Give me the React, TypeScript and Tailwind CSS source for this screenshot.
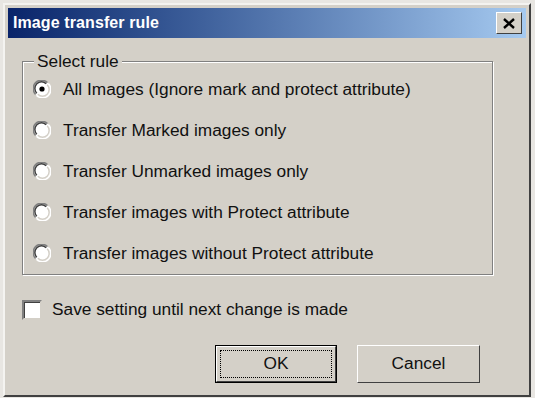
import React from "react";

const rules = [
  "All Images (Ignore mark and protect attribute)",
  "Transfer Marked images only",
  "Transfer Unmarked images only",
  "Transfer images with Protect attribute",
  "Transfer images without Protect attribute",
];

function Radio({ checked }: { checked?: boolean }) {
  return (
    <svg width="18" height="18" viewBox="0 0 18 18" className="shrink-0">
      <circle cx="9" cy="9" r="8.5" fill="#ffffff" />
      <path d="M2.6 14.4 A8 8 0 0 1 14.4 2.6" stroke="#808080" strokeWidth="1.5" fill="none" />
      <path d="M3.8 13.2 A6.3 6.3 0 0 1 13.2 3.8" stroke="#404040" strokeWidth="1.5" fill="none" />
      <path d="M15.4 3.6 A8 8 0 0 1 3.6 15.4" stroke="#ffffff" strokeWidth="1.5" fill="none" />
      <path d="M14.2 4.8 A6.3 6.3 0 0 1 4.8 14.2" stroke="#d4d0c8" strokeWidth="1.5" fill="none" />
      {checked && <circle cx="9" cy="9" r="2.6" fill="#000000" />}
    </svg>
  );
}

export default function App() {
  return (
    <div className="w-[535px] h-[398px] bg-[#e8e6e2] p-[3px] pb-[1px] pr-[4px]" style={{ fontFamily: '"Liberation Sans", Arial, sans-serif' }}>
      <div className="w-full h-full bg-[#d4d0c8] border-t-2 border-l-2 border-t-[#f4f3f0] border-l-[#f4f3f0] border-r-2 border-b-2 border-r-[#404040] border-b-[#404040] p-[3px] flex flex-col">
        {/* Title bar */}
        <div className="h-[30px] flex items-center justify-between pl-[5px] pr-[4px] bg-gradient-to-r from-[#0a246a] to-[#a6caf0]">
          <span className="text-white font-bold text-[16px] tracking-[0.1px]">Image transfer rule</span>
          <div className="w-[26px] h-[22px] bg-[#d4d0c8] border border-t-white border-l-white border-r-[#404040] border-b-[#404040] flex items-center justify-center">
            <svg width="12" height="11" viewBox="0 0 12 11">
              <path d="M1 1 L11 10 M11 1 L1 10" stroke="#000" strokeWidth="2.4" />
            </svg>
          </div>
        </div>
        {/* Body */}
        <div className="flex-1 flex flex-col pl-[14px] pr-[33px] pt-[23px] text-[17.3px] text-[#111]">
          <div className="relative border border-[#808080] shadow-[inset_1px_1px_0_#ffffff,1px_1px_0_#ffffff] h-[214px] pl-[10px] pt-[18px]">
            <span className="absolute left-[11px] top-[-11px] bg-[#d4d0c8] px-[3px] leading-[20px]">Select rule</span>
            <div className="flex flex-col gap-[23px]">
              {rules.map((r, i) => (
                <div key={r} className="flex items-center h-[18px]">
                  <Radio checked={i === 0} />
                  <span className="ml-[12px] leading-[18px] whitespace-nowrap">{r}</span>
                </div>
              ))}
            </div>
          </div>
          <div className="flex items-center mt-[22px] ml-[0px]">
            <div className="w-[20px] h-[20px] bg-white border-2 border-t-[#808080] border-l-[#808080] border-r-[#d4d0c8] border-b-[#d4d0c8] shadow-[inset_1px_1px_0_#404040]" />
            <span className="ml-[10px] whitespace-nowrap">Save setting until next change is made</span>
          </div>
          <div className="flex justify-end gap-[20px] mt-[22px] pr-[13px]">
            <div className="w-[122px] h-[38px] border border-black p-[0px]">
              <div className="w-full h-full border border-t-white border-l-white border-r-[#404040] border-b-[#404040] flex items-center justify-center p-[3px]">
                <div className="w-full h-full border border-dotted border-black flex items-center justify-center">OK</div>
              </div>
            </div>
            <div className="w-[123px] h-[38px] border border-t-white border-l-white border-r-[#404040] border-b-[#404040] flex items-center justify-center">
              Cancel
            </div>
          </div>
        </div>
      </div>
    </div>
  );
}
